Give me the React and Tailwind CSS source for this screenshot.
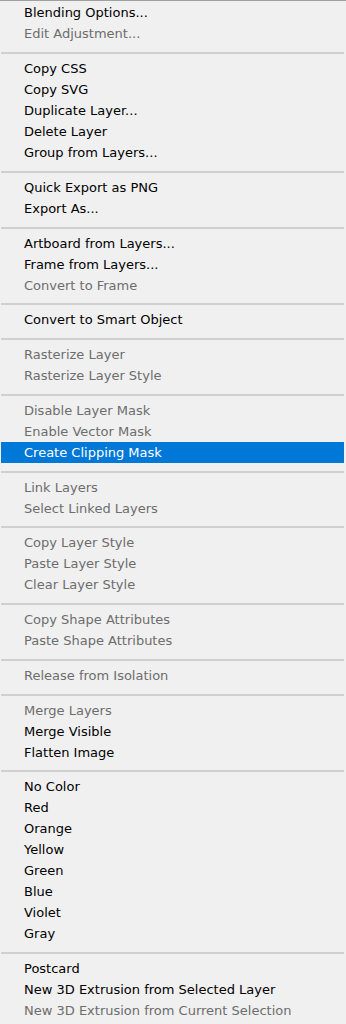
import React from "react";

const groups = [
  [["Blending Options...", 1], ["Edit Adjustment...", 0]],
  [["Copy CSS", 1], ["Copy SVG", 1], ["Duplicate Layer...", 1], ["Delete Layer", 1], ["Group from Layers...", 1]],
  [["Quick Export as PNG", 1], ["Export As...", 1]],
  [["Artboard from Layers...", 1], ["Frame from Layers...", 1], ["Convert to Frame", 0]],
  [["Convert to Smart Object", 1]],
  [["Rasterize Layer", 0], ["Rasterize Layer Style", 0]],
  [["Disable Layer Mask", 0], ["Enable Vector Mask", 0], ["Create Clipping Mask", 2]],
  [["Link Layers", 0], ["Select Linked Layers", 0]],
  [["Copy Layer Style", 0], ["Paste Layer Style", 0], ["Clear Layer Style", 0]],
  [["Copy Shape Attributes", 0], ["Paste Shape Attributes", 0]],
  [["Release from Isolation", 0]],
  [["Merge Layers", 0], ["Merge Visible", 1], ["Flatten Image", 1]],
  [["No Color", 1], ["Red", 1], ["Orange", 1], ["Yellow", 1], ["Green", 1], ["Blue", 1], ["Violet", 1], ["Gray", 1]],
  [["Postcard", 1], ["New 3D Extrusion from Selected Layer", 1], ["New 3D Extrusion from Current Selection", 0]],
];

function Item({ label, state }) {
  const cls =
    state === 2
      ? "bg-[#0078d7] text-white"
      : state === 1
      ? "text-[#000000]"
      : "text-[#6d6d6d]";
  return (
    <div className={`h-[21px] flex items-center pl-[23px] ml-[1px] mr-[2px] whitespace-nowrap ${cls}`}>
      {label}
    </div>
  );
}

function Separator() {
  return (
    <div className="h-[13.75px] pt-[7.75px] pl-[1px] pr-[2px]">
      <div className="h-[2px] w-full bg-[#d0d0d0]" />
    </div>
  );
}

export default function App() {
  return (
    <div
      className="w-[346px] h-[1024px] overflow-hidden bg-[#f0f0f0] border-t border-[#a0a0a0] text-[13px] leading-none"
      style={{ fontFamily: '"DejaVu Sans", sans-serif' }}
    >
      <div className="pt-[1.25px]">
        {groups.map((g, gi) => (
          <div key={gi}>
            {gi > 0 && <Separator />}
            {g.map(([label, state]) => (
              <Item key={label} label={label} state={state} />
            ))}
          </div>
        ))}
      </div>
    </div>
  );
}
